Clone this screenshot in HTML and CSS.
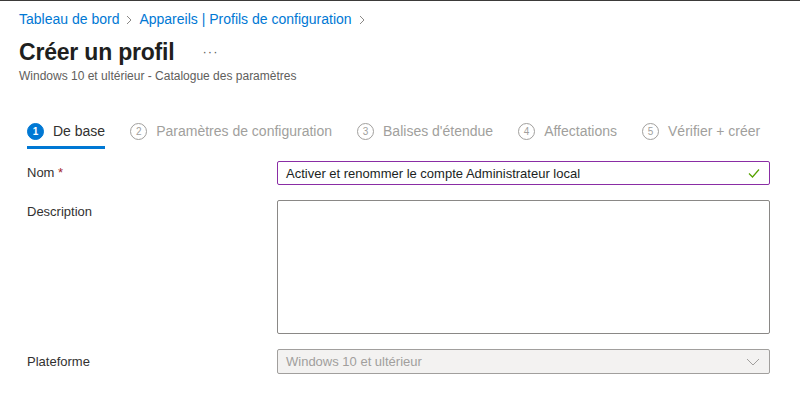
FILE: index.html
```html
<!DOCTYPE html>
<html lang="fr">
<head>
<meta charset="utf-8">
<link rel="stylesheet" href="styles.css">
</head>
<body>
<div class="page">
  <header class="header">
    <nav class="breadcrumb">
      <a class="crumb">Tableau de bord</a>
      <svg class="sep" width="8" height="10" viewBox="0 0 8 10"><path d="M2 1l4 4-4 4" fill="none" stroke="#8a8886" stroke-width="1"/></svg>
      <a class="crumb">Appareils | Profils de configuration</a>
      <svg class="sep" width="8" height="10" viewBox="0 0 8 10"><path d="M2 1l4 4-4 4" fill="none" stroke="#8a8886" stroke-width="1"/></svg>
    </nav>
    <div class="title-row">
      <h1 class="title">Créer un profil</h1>
      <span class="more">···</span>
    </div>
    <div class="subtitle">Windows 10 et ultérieur - Catalogue des paramètres</div>
  </header>

  <ol class="steps">
    <li class="step active"><span class="num">1</span><span class="label">De base</span></li>
    <li class="step"><span class="num">2</span><span class="label">Paramètres de configuration</span></li>
    <li class="step"><span class="num">3</span><span class="label">Balises d'étendue</span></li>
    <li class="step"><span class="num">4</span><span class="label">Affectations</span></li>
    <li class="step"><span class="num">5</span><span class="label">Vérifier + créer</span></li>
  </ol>

  <form class="form">
    <div class="row">
      <label class="lbl">Nom <span class="req">*</span></label>
      <div class="field input valid">
        <span class="value">Activer et renommer le compte Administrateur local</span>
        <svg class="check" width="12" height="10" viewBox="0 0 12 10"><path d="M1 5.5l3.5 3.5L11 1.5" fill="none" stroke="#57a300" stroke-width="1.2"/></svg>
      </div>
    </div>
    <div class="row top">
      <label class="lbl">Description</label>
      <div class="field textarea"></div>
    </div>
    <div class="row">
      <label class="lbl">Plateforme</label>
      <div class="field select">
        <span class="value">Windows 10 et ultérieur</span>
        <svg class="chev" width="14" height="8" viewBox="0 0 14 8"><path d="M1 1l6 6 6-6" fill="none" stroke="#a19f9d" stroke-width="1"/></svg>
      </div>
    </div>
  </form>
</div>
</body>
</html>
```

FILE: styles.css
```css
* { box-sizing: border-box; }
html, body { margin: 0; padding: 0; background: #fff; }
body {
  font-family: "Segoe UI", "Liberation Sans", Arial, sans-serif;
  color: #323130;
  width: 800px;
  height: 400px;
  overflow: hidden;
}
.page { border-top: 1px solid #3b3a39; }

.header { padding: 0 19px; }
.breadcrumb {
  display: flex;
  align-items: center;
  gap: 6px;
  height: 20px;
  margin-top: 8px;
  font-size: 14px;
}
.crumb { color: #0078d4; text-decoration: none; }
.sep { margin-top: 1px; }

.title-row {
  display: flex;
  align-items: center;
  height: 32px;
  margin-top: 7px;
}
.title {
  margin: 0;
  font-size: 23px;
  font-weight: 600;
  letter-spacing: -0.2px;
  color: #201f1e;
  line-height: 32px;
}
.more {
  margin-left: 28px;
  font-size: 13px;
  color: #605e5c;
  letter-spacing: 1px;
  line-height: 32px;
}
.subtitle {
  font-size: 12px;
  line-height: 16px;
  color: #605e5c;
}

.steps {
  list-style: none;
  margin: 35px 0 0 27px;
  padding: 0;
  display: flex;
  gap: 25px;
}
.step {
  display: flex;
  align-items: center;
  gap: 9px;
  height: 30px;
  padding-bottom: 3px;
  border-bottom: 3px solid transparent;
  font-size: 14px;
  color: #a19f9d;
}
.step .num {
  width: 17px;
  height: 17px;
  border-radius: 50%;
  border: 1px solid #a19f9d;
  font-size: 10px;
  display: flex;
  align-items: center;
  justify-content: center;
  color: #a19f9d;
}
.step.active { border-bottom-color: #0078d4; color: #323130; }
.step.active .num {
  background: #0078d4;
  border-color: #0078d4;
  color: #fff;
  font-weight: 700;
}

.form {
  margin: 12px 0 0 27px;
  display: flex;
  flex-direction: column;
  gap: 15px;
}
.row { display: flex; align-items: center; }
.row.top { align-items: flex-start; }
.lbl {
  width: 250px;
  font-size: 13px;
  line-height: 24px;
  color: #323130;
}
.req { color: #a4262c; }

.field {
  width: 493px;
  border: 1px solid #8a8886;
  border-radius: 2px;
  font-size: 13px;
}
.input {
  height: 24px;
  display: flex;
  align-items: center;
  justify-content: space-between;
  padding: 0 8px;
}
.select {
  height: 25px;
  display: flex;
  align-items: center;
  justify-content: space-between;
  padding: 0 8px;
  background: #f3f2f1;
  border-color: #a19f9d;
}
.input.valid { border-color: #8a2da5; }
.input .value { color: #201f1e; }
.check { margin-right: 1px; }
.textarea { height: 134px; }
.select .value { color: #a19f9d; }
.chev { margin-right: 1px; }
```
